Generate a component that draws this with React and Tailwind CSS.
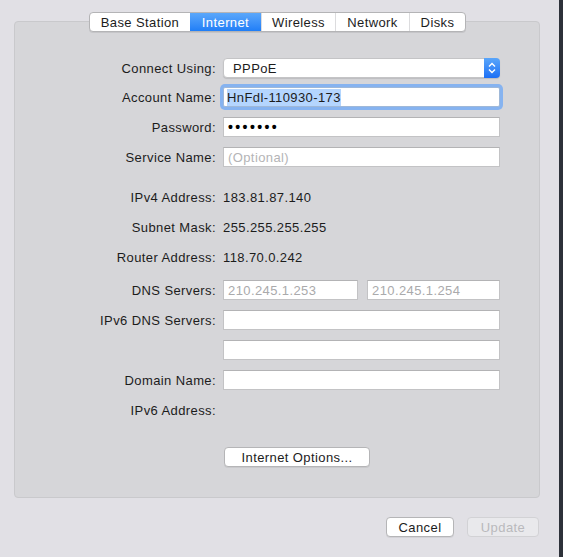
import React from "react";

const tabs = [
  { name: "Base Station", w: "w-[100px]" },
  { name: "Internet", w: "w-[71px]", active: true },
  { name: "Wireless", w: "w-[74px]" },
  { name: "Network", w: "w-[74px]" },
  { name: "Disks", w: "w-[56px]" },
];

function Row({ label, className = "", children }) {
  return (
    <div className={`flex h-[20px] items-center ${className}`}>
      <div className="w-[201px] pt-px text-right">{label}</div>
      <div className="ml-[7px] flex items-center">{children}</div>
    </div>
  );
}

function Field({ className = "w-[277px]", children }) {
  return (
    <div
      className={`flex h-[20px] items-center border border-[#c3c3c5] border-t-[#b3b3b5] bg-white px-[4px] pt-px ${className}`}
    >
      {children}
    </div>
  );
}

export default function App() {
  return (
    <div className="flex h-[557px] w-[563px] bg-[#e1e0e5] font-['Liberation_Sans',Arial,sans-serif] text-[13px] tracking-[0.4px] text-[#1c1c1c]">
      <div className="flex w-[559px] flex-col">
        {/* segmented tab control */}
        <div className="relative z-10 ml-[89px] mt-[12px] flex h-[20px] w-[377px] overflow-hidden rounded-[4px] border border-[#b4b4b6] bg-white shadow-[0_1px_0_rgba(0,0,0,0.08)]">
          {tabs.map((t, i) => (
            <div
              key={t.name}
              className={`flex h-full items-center justify-center pt-px ${t.w} ${
                t.active
                  ? "bg-gradient-to-b from-[#5aa7fa] to-[#1f7ef7] text-white"
                  : i > 1
                  ? "border-l border-[#dcdcde]"
                  : ""
              }`}
            >
              {t.name}
            </div>
          ))}
        </div>

        {/* panel */}
        <div className="-mt-[11px] ml-[14px] flex h-[477px] w-[526px] flex-col rounded-[4px] border border-[#c9c9cc] bg-[#d6d6d9] pt-[36px]">
          <Row label="Connect Using:">
            <div className="flex h-[20px] w-[277px] items-center rounded-[4px] border border-[#c4c4c6] bg-white shadow-[0_1px_1px_rgba(0,0,0,0.12)]">
              <span className="pl-[9px] pt-px">PPPoE</span>
              <div className="ml-auto flex h-[20px] w-[16px] -mr-px -my-px flex-col items-center justify-center rounded-r-[4px] bg-gradient-to-b from-[#5aa6fa] to-[#1c6ff5]">
                <svg width="8" height="12" viewBox="0 0 8 12" fill="none" stroke="white" strokeWidth="1.4">
                  <path d="M1 4.5 L4 1.5 L7 4.5" />
                  <path d="M1 7.5 L4 10.5 L7 7.5" />
                </svg>
              </div>
            </div>
          </Row>

          <Row label="Account Name:" className="mt-[9px]">
            <div className="flex h-[20px] w-[277px] items-center rounded-[2px] border border-[#9fb8d8] bg-white px-[3px] shadow-[0_0_0_3px_#86b3f0]">
              <span className="bg-[#b4d5fe] pt-px leading-[16px]">HnFdl-110930-173</span>
            </div>
          </Row>

          <Row label="Password:" className="mt-[10px]">
            <Field>
              <span className="text-[14px] font-bold tracking-[2.4px] text-black">•••••••</span>
            </Field>
          </Row>

          <Row label="Service Name:" className="mt-[10px]">
            <Field>
              <span className="text-[#b4b4b6]">(Optional)</span>
            </Field>
          </Row>

          <Row label="IPv4 Address:" className="mt-[20px]">
            <span className="pt-px">183.81.87.140</span>
          </Row>
          <Row label="Subnet Mask:" className="mt-[10px]">
            <span className="pt-px">255.255.255.255</span>
          </Row>
          <Row label="Router Address:" className="mt-[10px]">
            <span className="pt-px">118.70.0.242</span>
          </Row>

          <Row label="DNS Servers:" className="mt-[13px]">
            <Field className="w-[135px]">
              <span className="text-[#aaaaac]">210.245.1.253</span>
            </Field>
            <Field className="ml-[9px] w-[133px]">
              <span className="text-[#aaaaac]">210.245.1.254</span>
            </Field>
          </Row>

          <Row label="IPv6 DNS Servers:" className="mt-[10px]">
            <Field />
          </Row>
          <Row label="" className="mt-[10px]">
            <Field />
          </Row>
          <Row label="Domain Name:" className="mt-[10px]">
            <Field />
          </Row>
          <Row label="IPv6 Address:" className="mt-[10px]" />

          <Row label="" className="mt-[27px]">
            <button className="ml-px flex h-[20px] w-[146px] items-center justify-center rounded-[4px] border border-[#b5b5b7] bg-white pt-px shadow-[0_1px_0_rgba(0,0,0,0.06)]">
              Internet Options...
            </button>
          </Row>
        </div>

        {/* bottom buttons */}
        <div className="mt-[19px] flex justify-end gap-[13px] pr-[20px]">
          <button className="flex h-[20px] w-[68px] items-center justify-center rounded-[4px] border border-[#b5b5b7] bg-white pt-px shadow-[0_1px_0_rgba(0,0,0,0.06)]">
            Cancel
          </button>
          <button className="flex h-[20px] w-[72px] items-center justify-center rounded-[4px] border border-[#d2d2d5] bg-[#e9e9ec] pt-px text-[#b9b9bc]">
            Update
          </button>
        </div>
      </div>
      <div className="w-[4px] bg-[#2d3139]" />
    </div>
  );
}
